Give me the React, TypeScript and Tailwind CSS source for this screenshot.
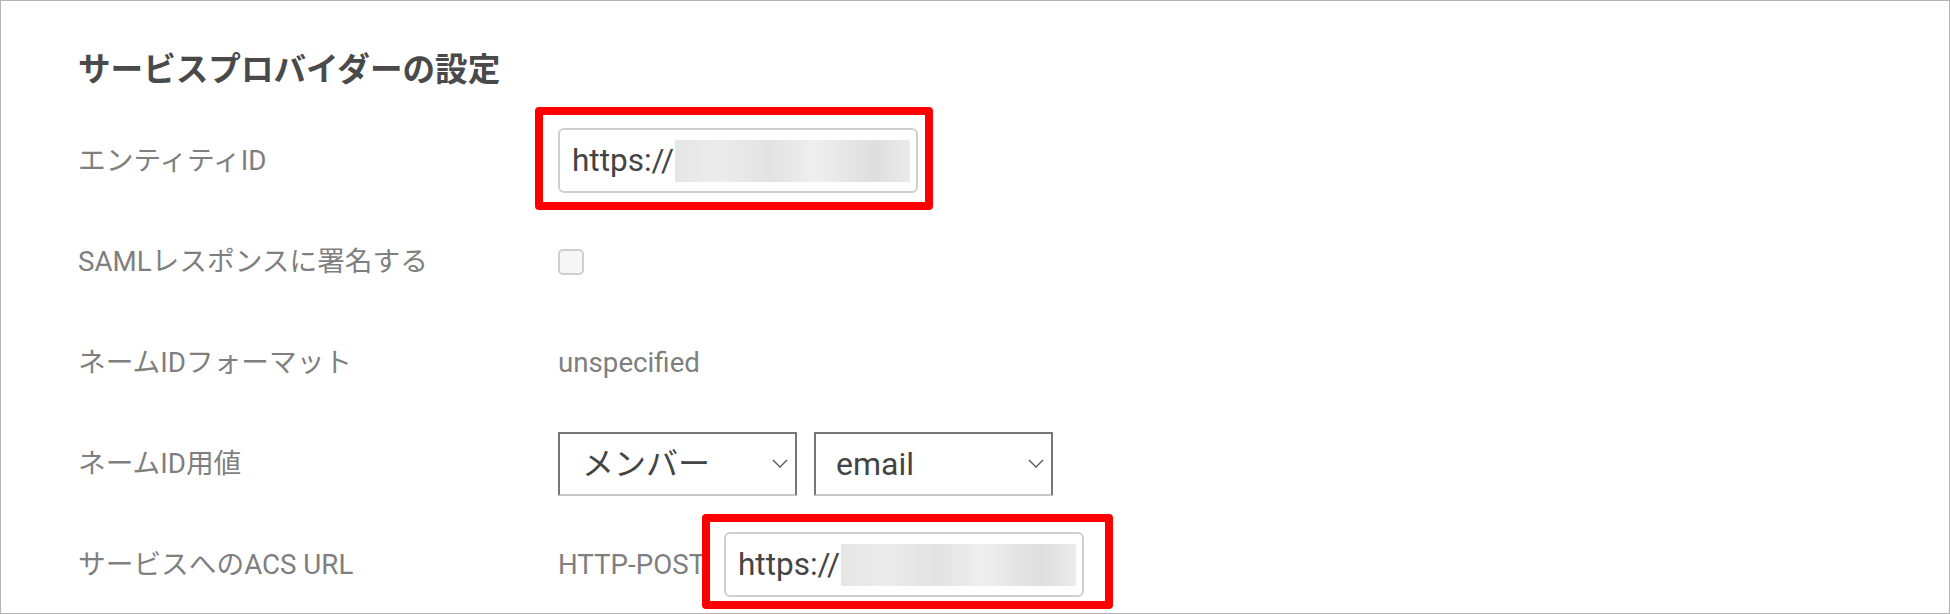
import React from 'react';

const Chevron: React.FC = () => (
  <svg width="16" height="9" viewBox="0 0 16 9" className="shrink-0">
    <polyline points="1,1 8,8 15,1" fill="none" stroke="#555" strokeWidth="1.3" />
  </svg>
);

interface RowProps {
  label: string;
  children: React.ReactNode;
}

const Row: React.FC<RowProps> = ({ label, children }) => (
  <div className="flex items-center h-[101px] shrink-0">
    <div className="w-[480px] shrink-0 text-[27.7px] text-[#7f7f7f]">{label}</div>
    <div className="flex items-center">{children}</div>
  </div>
);

// redacted url field, the red box is a marker drawn on top of it
const UrlField: React.FC<{ box: string }> = ({ box }) => (
  <div className="relative">
    <div className="flex items-center w-[360px] h-[65px] border-2 border-[#cfcfcf] rounded-[6px] pl-[12px] bg-white text-[31.5px] text-[#444] overflow-hidden">
      <span>https://</span>
      <div className="ml-[1px] w-[235px] h-[42px] shrink-0 bg-[linear-gradient(90deg,#e6e6e6,#ececec_20%,#e2e2e2_40%,#efefef_60%,#dedede_85%,#ebebeb)]" />
    </div>
    <div className={`absolute border-[8px] border-[#ff0000] rounded-[4px] pointer-events-none ${box}`} />
  </div>
);

const App: React.FC = () => {
  return (
    <div className="w-full h-[614px] overflow-hidden border border-[#b4b4b4] bg-white font-['Roboto','Noto_Sans_CJK_JP',sans-serif]">
      <div className="flex flex-col pl-[77px]">
        <div className="h-[109px] pt-[45px] shrink-0">
          <h2 className="text-[32.6px] leading-[48px] font-bold text-[#4a4a4a]">サービスプロバイダーの設定</h2>
        </div>

        <Row label="エンティティID">
          <UrlField box="-left-[23px] -top-[21px] -right-[15px] -bottom-[17px]" />
        </Row>

        <Row label="SAMLレスポンスに署名する">
          <div className="w-[26px] h-[26px] rounded-[5px] border-2 border-[#cfcfcf] bg-[#f6f6f6]" />
        </Row>

        <Row label="ネームIDフォーマット">
          <span className="text-[27.7px] text-[#7f7f7f]">unspecified</span>
        </Row>

        <Row label="ネームID用値">
          <div className="flex items-center gap-[17px]">
            <div className="flex items-center justify-between w-[239px] h-[64px] border-2 border-[#777] border-b-[#c8c8c8] pl-[22px] pr-[7px] text-[32px] text-[#444]">
              <span>メンバー</span>
              <Chevron />
            </div>
            <div className="flex items-center justify-between w-[239px] h-[64px] border-2 border-[#777] border-b-[#c8c8c8] pl-[20px] pr-[7px] text-[32px] text-[#444]">
              <span>email</span>
              <Chevron />
            </div>
          </div>
        </Row>

        <Row label="サービスへのACS URL">
          <span className="w-[166px] shrink-0 text-[27.7px] text-[#7f7f7f] whitespace-nowrap">HTTP-POST</span>
          <UrlField box="-left-[22px] -top-[18px] -right-[29px] -bottom-[12px]" />
        </Row>
      </div>
    </div>
  );
};

export default App;
